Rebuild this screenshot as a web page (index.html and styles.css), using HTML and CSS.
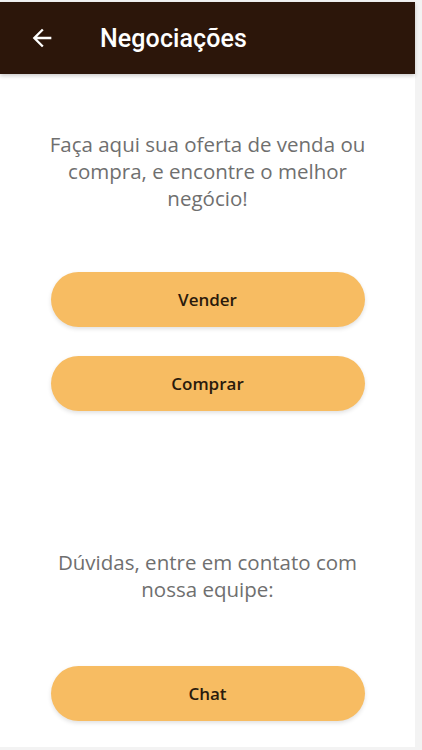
FILE: index.html
```html
<!DOCTYPE html>
<html lang="pt-BR">
<head>
    <meta charset="UTF-8">
    <meta name="viewport" content="width=device-width, initial-scale=1.0">
    <title>Negociações</title>
    <link rel="stylesheet" href="styles.css">
</head>
<body>
    <div class="app">
        <header class="toolbar">
            <button class="back-btn" aria-label="Voltar">
                <svg width="28" height="28" viewBox="0 0 24 24">
                    <path d="M20 11H7.83l5.59-5.59L12 4l-8 8 8 8 1.41-1.41L7.83 13H20v-2z" fill="#fff"/>
                </svg>
            </button>
            <h1 class="title">Negociações</h1>
        </header>

        <main class="content">
            <p class="intro">Faça aqui sua oferta de venda ou compra, e encontre o melhor negócio!</p>

            <div class="actions">
                <button class="pill-btn">Vender</button>
                <button class="pill-btn">Comprar</button>
            </div>

            <p class="help">Dúvidas, entre em contato com nossa equipe:</p>

            <button class="pill-btn chat-btn">Chat</button>
        </main>
    </div>
</body>
</html>
```

FILE: styles.css
```css
* {
    margin: 0;
    padding: 0;
    box-sizing: border-box;
}

body {
    font-family: 'Open Sans', 'Noto Sans', sans-serif;
    background: #f3f3f3;
    height: 750px;
    overflow: hidden;
}

.app {
    width: 415px;
    height: 745px;
    margin-top: 2px;
    background: #fff;
    display: flex;
    flex-direction: column;
}

.toolbar {
    height: 72px;
    flex-shrink: 0;
    background: #2c160a;
    display: flex;
    align-items: center;
    padding-left: 28px;
    box-shadow: 0 2px 4px rgba(0, 0, 0, 0.2);
}

.back-btn {
    background: none;
    border: none;
    width: 28px;
    height: 28px;
    display: flex;
    align-items: center;
    justify-content: center;
    margin-right: 44px;
}

.title {
    font-family: Roboto, sans-serif;
    font-weight: 500;
    font-size: 25px;
    color: #fff;
    letter-spacing: 0.1px;
    margin-top: 1px;
}

.content {
    display: flex;
    flex-direction: column;
    align-items: center;
    padding-top: 57px;
}

.intro,
.help {
    font-size: 20.5px;
    line-height: 27px;
    color: #6f6f6f;
    text-align: center;
    padding: 0 44px;
}

.actions {
    display: flex;
    flex-direction: column;
    gap: 29px;
    margin-top: 60px;
}

.pill-btn {
    width: 314px;
    height: 55px;
    border: none;
    border-radius: 28px;
    background: #f7bc62;
    color: #2a1a0c;
    font-family: 'Open Sans', sans-serif;
    font-size: 17px;
    font-weight: 600;
    box-shadow: 0 2px 4px rgba(0, 0, 0, 0.12);
}

.help {
    margin-top: 138px;
}

.chat-btn {
    margin-top: 63px;
}
```
